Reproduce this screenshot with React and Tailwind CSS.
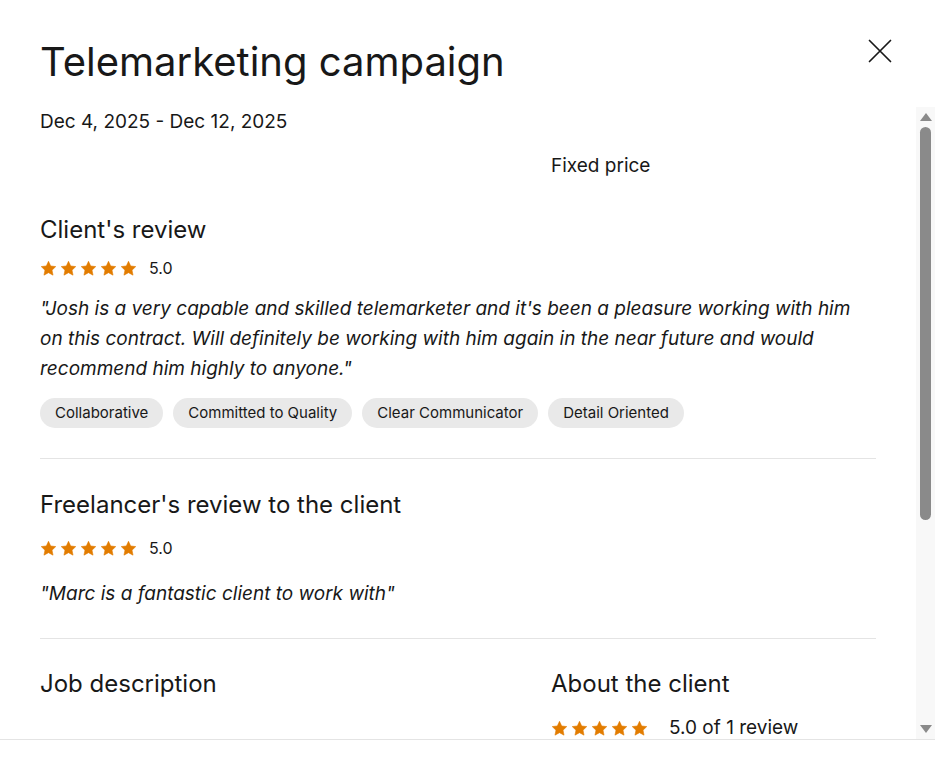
const font = { fontFamily: 'Inter, "Noto Sans", sans-serif' }

function Stars() {
  return (
    <div className="flex gap-[3px]">
      {[0, 1, 2, 3, 4].map(i => (
        <svg key={i} viewBox="0 0 24 24" className="w-[17px] h-[17px]">
          <path
            d="M12 1.8l3.1 6.6 7.2.9-5.3 5 1.4 7.1L12 17.9l-6.4 3.5 1.4-7.1-5.3-5 7.2-.9z"
            fill="#e27c00"
            stroke="#e27c00"
            strokeWidth="0.8"
            strokeLinejoin="round"
          />
        </svg>
      ))}
    </div>
  )
}

const chips = ['Collaborative', 'Committed to Quality', 'Clear Communicator', 'Detail Oriented']

export default function App() {
  return (
    <div className="h-screen flex flex-col bg-white text-[#181818] overflow-hidden" style={font}>
      <div className="flex items-start justify-between pl-10 pr-[43px] pt-[38px] h-[107px] shrink-0">
        <h1 className="text-[40px] leading-[48px] font-normal">Telemarketing campaign</h1>
        <button className="mt-[1px] text-[#181818]">
          <svg viewBox="0 0 24 24" className="w-[24px] h-[24px]" fill="none" stroke="currentColor" strokeWidth="1.7" strokeLinecap="round">
            <path d="M1.5 1.5l21 21M22.5 1.5l-21 21" />
          </svg>
        </button>
      </div>

      <div className="relative flex-1 overflow-hidden">
        <div className="pl-10 pr-[59px] pt-[1px]">
          <p className="text-[19px] leading-[28px]">Dec 4, 2025 - Dec 12, 2025</p>

          <div className="grid grid-cols-[491px_1fr] gap-x-[20px] mt-[16px]">
            <div></div>
            <p className="text-[19px] leading-[28px]">Fixed price</p>
          </div>

          <div className="pt-[34px] pb-[30px] border-b border-[#e4e4e4]">
            <h2 className="text-[24px] leading-[32px]">Client's review</h2>
            <div className="flex items-center gap-[12px] mt-[11px]">
              <Stars />
              <span className="text-[16px] leading-[22px]">5.0</span>
            </div>
            <p className="italic text-[19px] leading-[30px] mt-[15px] pr-[10px]">
              "Josh is a very capable and skilled telemarketer and it's been a pleasure working with him on this contract. Will definitely be working with him again in the near future and would recommend him highly to anyone."
            </p>
            <div className="flex flex-wrap gap-[10px] mt-[14px]">
              {chips.map(c => (
                <span key={c} className="h-[30px] flex items-center px-[15px] rounded-full bg-[#e9e9e9] text-[15px]">
                  {c}
                </span>
              ))}
            </div>
          </div>

          <div className="pt-[30px] pb-[29px] border-b border-[#e4e4e4]">
            <h2 className="text-[24px] leading-[32px]">Freelancer's review to the client</h2>
            <div className="flex items-center gap-[12px] mt-[16px]">
              <Stars />
              <span className="text-[16px] leading-[22px]">5.0</span>
            </div>
            <p className="italic text-[19px] leading-[30px] mt-[20px]">"Marc is a fantastic client to work with"</p>
          </div>

          <div className="grid grid-cols-[491px_1fr] gap-x-[20px] pt-[29px]">
            <div>
              <h2 className="text-[24px] leading-[32px]">Job description</h2>
            </div>
            <div>
              <h2 className="text-[24px] leading-[32px]">About the client</h2>
              <div className="flex items-center gap-[21px] mt-[15px]">
                <Stars />
                <span className="text-[19px] leading-[26px]">5.0 of 1 review</span>
              </div>
            </div>
          </div>
        </div>

        <div className="absolute top-0 right-0 bottom-0 w-[19px] bg-[#f8f8f8] flex flex-col items-center">
          <div className="mt-[6px] w-0 h-0 border-l-[6px] border-r-[6px] border-b-[8px] border-l-transparent border-r-transparent border-b-[#8a8a8a]"></div>
          <div className="mt-[6px] w-[11px] h-[393px] rounded-full bg-[#8a8a8a] ml-[-1px]"></div>
          <div className="flex-1"></div>
          <div className="mb-[6px] w-0 h-0 border-l-[6px] border-r-[6px] border-t-[8px] border-l-transparent border-r-transparent border-t-[#8a8a8a]"></div>
        </div>
      </div>

      <div className="h-[35px] shrink-0 border-t border-[#e4e4e4] bg-white"></div>
    </div>
  )
}
